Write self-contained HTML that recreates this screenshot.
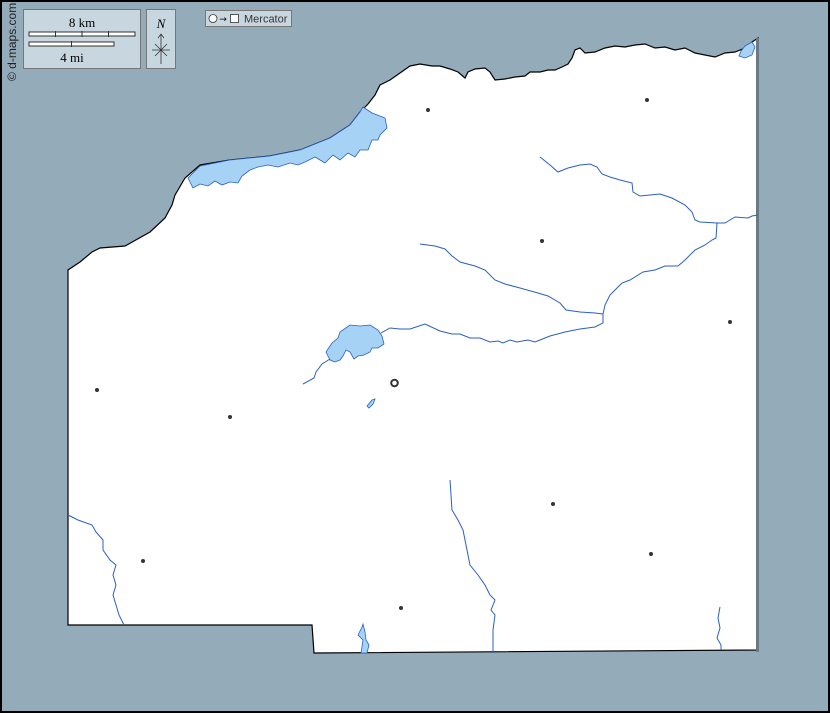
<!DOCTYPE html>
<html><head><meta charset="utf-8"><style>
html,body{margin:0;padding:0}
body{width:830px;height:713px;overflow:hidden;background:#94abba}
</style></head><body>
<svg width="830" height="713" viewBox="0 0 830 713" xmlns="http://www.w3.org/2000/svg" style="position:absolute;left:0;top:0">
<rect x="0" y="0" width="830" height="713" fill="#94abba"/>
<rect x="1" y="1" width="828" height="711" fill="none" stroke="#000" stroke-width="2"/>
<path d="M68,625 L68,270 L80,262 L92,252 L100,248 L125,246 L150,232 L165,218 L172,205 L175,195 L178,190 L185,178 L200,165 L230,160 L270,156 L300,150 L330,138 L350,125 L360,112 L368,104 L375,95 L380,85 L390,80 L400,73 L410,66 L420,64 L432,66 L440,66 L450,69 L458,72 L465,78 L468,72 L475,69 L485,68 L490,72 L495,80 L505,79 L515,77 L525,76 L530,72 L540,72 L548,70 L555,70 L562,67 L568,64 L572,58 L575,50 L580,48 L585,53 L595,52 L605,48 L615,46 L625,47 L635,45 L645,44 L655,48 L665,47 L675,50 L685,48 L695,53 L705,55 L715,57 L725,53 L735,52 L745,48 L752,42 L758,38 L758,650 L314,653 L312,625 Z" fill="#fff" stroke="#000" stroke-width="1.2"/>
<rect x="756" y="38" width="3" height="614" fill="#6a7a84"/>
<path d="M188,178 L200,166 L230,160 L270,156 L300,150 L330,138 L350,125 L360,112 L363,107 L372,113 L385,118 L387,128 L380,135 L378,140 L372,140 L368,150 L360,150 L355,157 L348,153 L340,160 L333,155 L325,163 L315,157 L305,162 L298,165 L290,163 L278,167 L268,165 L258,167 L250,170 L242,176 L238,183 L230,182 L222,185 L215,181 L208,186 L200,184 L193,188 L190,182 Z" fill="#a6d3f5" stroke="#2a5fc0" stroke-width="0.8"/>
<path d="M745,46 L752,42 L755,47 L752,55 L745,58 L739,56 L741,51 Z" fill="#a6d3f5" stroke="#2a5fc0" stroke-width="0.8"/>
<path d="M330,360 L326,352 L332,343 L338,338 L340,332 L350,325 L360,326 L370,325 L378,330 L382,336 L384,344 L378,348 L372,348 L370,352 L364,355 L358,356 L354,359 L350,352 L346,350 L343,356 L340,360 L335,362 Z" fill="#a6d3f5" stroke="#2a5fc0" stroke-width="0.8"/>
<path d="M367,406 L372,400 L375,399 L373,404 L369,408 Z" fill="#a6d3f5" stroke="#2a5fc0" stroke-width="0.8"/>
<path d="M361,653 L363,640 L358,635 L362,627 L363,624 L365,632 L366,640 L369,645 L367,653 Z" fill="#a6d3f5" stroke="#2a5fc0" stroke-width="0.8"/>
<g fill="none" stroke="#2a5fc0" stroke-width="1">
<path d="M381,333 L390,328 L400,329 L410,329 L425,324 L440,331 L452,334 L460,334 L470,338 L480,338 L490,342 L498,341 L503,343 L510,340 L517,342 L528,340 L535,342 L540,340 L550,336 L565,332 L580,329 L595,327 L603,323 L603,314"/>
<path d="M330,359 L322,364 L316,372 L314,378 L303,384"/>
<path d="M420,244 L435,246 L445,249 L452,256 L460,262 L475,266 L485,270 L495,280 L505,284 L520,288 L538,293 L548,296 L560,303 L566,310 L580,312 L595,313 L603,314"/>
<path d="M603,314 L605,305 L610,295 L615,290 L622,283 L630,280 L643,272 L655,270 L665,266 L678,266 L685,260 L695,250 L705,245 L712,240 L716,238 L717,223"/>
<path d="M540,157 L550,165 L558,172 L568,168 L580,165 L590,164 L597,167 L602,174 L610,177 L620,180 L632,183 L633,192 L640,196 L650,195 L660,194 L672,198 L685,205 L692,212 L695,220 L700,222 L717,223 L725,223 L735,217 L748,218 L752,216 L758,215"/>
<path d="M68,515 L78,520 L92,525 L96,532 L103,540 L103,550 L110,560 L116,565 L113,575 L116,585 L113,595 L116,605 L119,615 L124,625"/>
<path d="M450,480 L451,495 L452,510 L458,520 L463,530 L466,545 L470,565 L478,575 L485,585 L490,595 L495,600 L491,610 L495,615 L493,630 L493,653"/>
<path d="M720,607 L718,618 L720,628 L717,638 L721,645 L721,650"/>
</g>
<g fill="#333">
<circle cx="428" cy="110" r="2"/><circle cx="647" cy="100" r="2"/><circle cx="542" cy="241" r="2"/>
<circle cx="730" cy="322" r="2"/><circle cx="97" cy="390" r="2"/><circle cx="230" cy="417" r="2"/>
<circle cx="553" cy="504" r="2"/><circle cx="651" cy="554" r="2"/><circle cx="143" cy="561" r="2"/>
<circle cx="401" cy="608" r="2"/>
</g>
<circle cx="394.5" cy="383" r="3.3" fill="none" stroke="#333" stroke-width="2"/>
<rect x="23.5" y="9.5" width="117" height="59" fill="#c8d7df" stroke="#777"/>
<text x="82" y="27" font-family="Liberation Serif,serif" font-size="13" text-anchor="middle">8 km</text>
<rect x="29" y="32" width="106" height="4" fill="#fff" stroke="#333" stroke-width="1"/>
<path d="M55.5,31v6M82,31v6M108.5,31v6" stroke="#333" stroke-width="1"/>
<rect x="29" y="42" width="85" height="4" fill="#fff" stroke="#333" stroke-width="1"/>
<path d="M71.5,41v6" stroke="#333" stroke-width="1"/>
<text x="72" y="62" font-family="Liberation Serif,serif" font-size="13" text-anchor="middle">4 mi</text>
<rect x="146.5" y="9.5" width="29" height="59" fill="#c8d7df" stroke="#777"/>
<text x="161" y="28" font-family="Liberation Serif,serif" font-size="13" font-style="italic" text-anchor="middle">N</text>
<path d="M161,34V64M152,50H170M155,44L167,56M167,44L155,56M158,38L161,34L164,38" fill="none" stroke="#333" stroke-width="0.8"/>
<rect x="205.5" y="10.5" width="86" height="16" fill="#c8d7df" stroke="#777"/>
<circle cx="213" cy="18.5" r="4" fill="#fff" stroke="#333" stroke-width="0.8"/>
<text x="223" y="22" font-family="DejaVu Sans,sans-serif" font-size="9" text-anchor="middle">→</text>
<rect x="230.5" y="14.5" width="8" height="8" fill="#fff" stroke="#333" stroke-width="0.8"/>
<text x="244" y="22.5" font-family="Liberation Sans,sans-serif" font-size="11" fill="#333">Mercator</text>
<text transform="translate(16,81) rotate(-90)" font-family="Liberation Sans,sans-serif" font-size="12" fill="#222">© d-maps.com</text>
</svg>
</body></html>
